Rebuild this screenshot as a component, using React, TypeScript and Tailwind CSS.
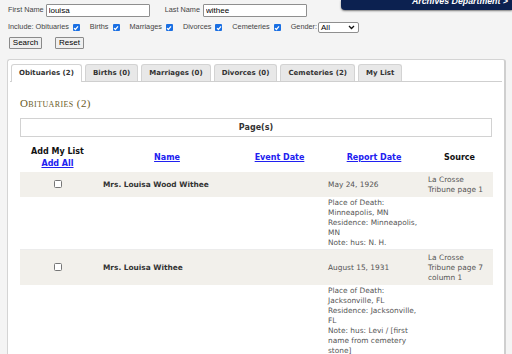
import React from "react";

type Record = {
  name: string;
  reportDate: string;
  source: string;
  details: string[];
};

const records: Record[] = [
  {
    name: "Mrs. Louisa Wood Withee",
    reportDate: "May 24, 1926",
    source: "La Crosse Tribune page 1",
    details: ["Place of Death: Minneapolis, MN", "Residence: Minneapolis, MN", "Note: hus: N. H."],
  },
  {
    name: "Mrs. Louisa Withee",
    reportDate: "August 15, 1931",
    source: "La Crosse Tribune page 7 column 1",
    details: [
      "Place of Death: Jacksonville, FL",
      "Residence: Jacksonville, FL",
      "Note: hus: Levi / [first name from cemetery stone]",
    ],
  },
];

const tabs = ["Obituaries (2)", "Births (0)", "Marriages (0)", "Divorces (0)", "Cemeteries (2)", "My List"];

const Check = ({ label, first }: { label: string; first?: boolean }) => (
  <label className={`flex items-center ${first ? "" : "ml-[10px]"}`}>
    <span>{label}</span>
    <span className="ml-[4px] w-[7px] h-[7px] rounded-[1px] bg-[#1a6fe3] flex items-center justify-center">
      <svg width="6" height="6" viewBox="0 0 6 6">
        <path d="M1 3.1 L2.4 4.5 L5 1.3" fill="none" stroke="white" strokeWidth="1.2" />
      </svg>
    </span>
  </label>
);

export default function App() {
  return (
    <div className="relative min-h-screen overflow-hidden bg-[#f4f4f4] font-['Liberation_Sans',Arial,sans-serif] text-[#444]">
      {/* header badge */}
      <div className="absolute top-0 left-[341px] right-0 h-[10px] overflow-hidden rounded-bl-[4px] bg-[#0c2150] shadow-[0_1px_2px_rgba(0,0,0,0.5)]">
        <div className="flex justify-end pr-[4px] -mt-[4.5px]">
          <span className="text-[8.8px] leading-[10px] font-bold italic text-white">Archives Department &gt;</span>
        </div>
      </div>

      {/* search form */}
      <div className="pl-[8px] pt-[4px] text-[7.3px]">
        <div className="flex items-center h-[13px]">
          <span>First Name</span>
          <input
            defaultValue="louisa"
            className="ml-[2px] w-[104px] h-[13px] border border-[#8f8f8f] rounded-[1px] bg-white px-[2px] text-[8px] text-black outline-none"
          />
          <span className="ml-[15px]">Last Name</span>
          <input
            defaultValue="withee"
            className="ml-[3px] w-[104px] h-[13px] border border-[#8f8f8f] rounded-[1px] bg-white px-[2px] text-[8px] text-black outline-none"
          />
        </div>
        <div className="flex items-center h-[11px] mt-[5px]">
          <Check label="Include: Obituaries" first />
          <Check label="Births" />
          <Check label="Marriages" />
          <Check label="Divorces" />
          <Check label="Cemeteries" />
          <span className="ml-[10px]">Gender:</span>
          <div className="ml-[1px] flex items-center justify-between w-[41px] h-[11px] border border-[#8f8f8f] rounded-[2px] bg-white pl-[2px] pr-[3px] text-[8px] text-black">
            <span>All</span>
            <svg width="7" height="5" viewBox="0 0 7 5">
              <path d="M1 1 L3.5 3.5 L6 1" fill="none" stroke="#111" strokeWidth="1.3" />
            </svg>
          </div>
        </div>
        <div className="flex items-center mt-[4px] ml-[1px]">
          <button className="w-[33px] h-[12px] border border-[#8a8a8a] rounded-[1px] bg-[#efefef] text-[8px] leading-none text-black">
            Search
          </button>
          <button className="ml-[13px] w-[29px] h-[12px] border border-[#8a8a8a] rounded-[1px] bg-[#efefef] text-[8px] leading-none text-black">
            Reset
          </button>
        </div>
      </div>

      {/* results panel */}
      <div className="mt-[10px] ml-[7px] w-[499px] min-h-[320px] border border-[#d4d4d4] border-r-2 border-r-[#cfcfcf] rounded-[3px] bg-white p-[2px] font-['DejaVu_Sans',Verdana,sans-serif]">
        <div className="flex pl-[1px] pt-[2px] border-b border-[#cfcfcf]">
          {tabs.map((t, i) => (
            <div
              key={t}
              className={`mr-[3px] h-[17px] px-[7px] flex items-center border border-b-0 border-[#d3d3d3] rounded-t-[3px] text-[7px] font-bold text-[#333] ${
                i === 0 ? "bg-white -mb-px h-[18px]" : "bg-[#e8e8e8]"
              }`}
            >
              {t}
            </div>
          ))}
        </div>

        <div className="px-[10px]">
          <h2 className="mt-[15px] font-['Liberation_Serif',serif] text-[11px] leading-[13px] tracking-[0.4px] text-[#6b5c28] [font-variant:small-caps]">
            Obituaries (2)
          </h2>
          <div className="mt-[8px] h-[19px] flex items-center justify-center border border-[#d2d2d2] text-[8px] font-bold text-[#333]">
            Page(s)
          </div>

          <table className="mt-[7px] w-[473px] table-fixed border-collapse text-[7.4px] leading-[10px] text-[#555]">
            <colgroup>
              <col className="w-[75px]" />
              <col className="w-[144px]" />
              <col className="w-[81px]" />
              <col className="w-[100px]" />
              <col className="w-[73px]" />
            </colgroup>
            <thead>
              <tr className="h-[28px] text-[8px] font-bold">
                <th className="align-middle text-center leading-[12px]">
                  <div className="text-[#111]">Add My List</div>
                  <a className="text-[#2020f0] underline">Add All</a>
                </th>
                <th className="align-middle text-center">
                  <a className="text-[#2020f0] underline">Name</a>
                </th>
                <th className="align-middle text-center">
                  <a className="text-[#2020f0] underline">Event Date</a>
                </th>
                <th className="align-middle text-center pl-[8px]">
                  <a className="text-[#2020f0] underline">Report Date</a>
                </th>
                <th className="align-middle text-center text-[#111] pl-[6px]">Source</th>
              </tr>
            </thead>
            <tbody>
              {records.map((r) => (
                <React.Fragment key={r.name}>
                  <tr className="bg-[#f2f0eb]">
                    <td className="py-[2.5px] text-center align-middle">
                      <span className="inline-block w-[8px] h-[8px] border border-[#767676] rounded-[1.5px] bg-white align-middle" />
                    </td>
                    <td className="py-[2.5px] pl-[8px] align-middle font-bold text-[#333]">{r.name}</td>
                    <td></td>
                    <td className="py-[2.5px] pl-[8px] align-middle">{r.reportDate}</td>
                    <td className="py-[2.5px] pl-[8px] align-middle">{r.source}</td>
                  </tr>
                  <tr className="border-b border-[#ececec]">
                    <td></td>
                    <td></td>
                    <td></td>
                    <td className="py-[1px] pl-[8px] align-top">
                      {r.details.map((d) => (
                        <div key={d}>{d}</div>
                      ))}
                    </td>
                    <td></td>
                  </tr>
                </React.Fragment>
              ))}
            </tbody>
          </table>
        </div>
      </div>
    </div>
  );
}
